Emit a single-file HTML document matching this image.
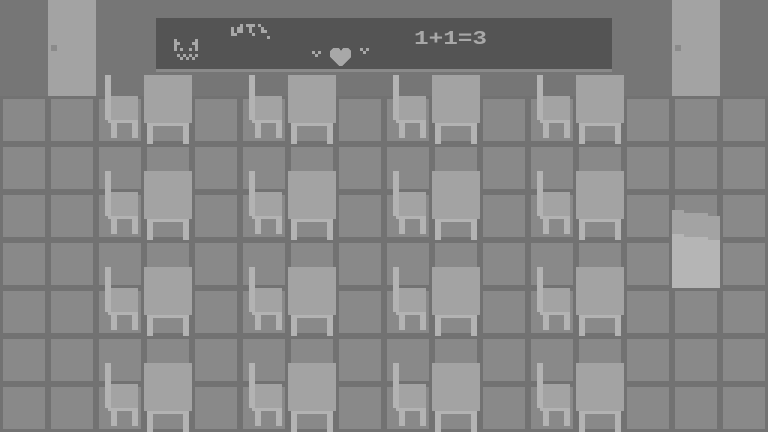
<!DOCTYPE html>
<html><head><meta charset="utf-8"><style>html,body{margin:0;padding:0;background:#767676;overflow:hidden}svg{display:block}</style></head>
<body>
<svg width="768" height="432" viewBox="0 0 768 432" xmlns="http://www.w3.org/2000/svg" shape-rendering="crispEdges">
<defs>
<pattern id="tile" x="0" y="96" width="48" height="48" patternUnits="userSpaceOnUse">
<rect width="48" height="48" fill="#727272"/>
<rect x="3" y="3" width="42" height="42" fill="#898989"/>
</pattern>
<g id="unit">
<!-- chair -->
<rect x="108" y="96" width="30" height="27" fill="#a3a3a3"/>
<rect x="108" y="120" width="30" height="3" fill="#b3b3b3"/>
<rect x="105" y="75" width="6" height="45" fill="#b3b3b3"/>
<rect x="111" y="123" width="6" height="15" fill="#b3b3b3"/>
<rect x="132" y="123" width="6" height="15" fill="#b3b3b3"/>
<!-- desk -->
<rect x="144" y="75" width="48" height="48" fill="#a3a3a3"/>
<rect x="147" y="123" width="42" height="3" fill="#b3b3b3"/>
<rect x="147" y="123" width="6" height="21" fill="#b3b3b3"/>
<rect x="183" y="123" width="6" height="21" fill="#b3b3b3"/>
</g>
<g id="row">
<use href="#unit"/>
<use href="#unit" x="144"/>
<use href="#unit" x="288"/>
<use href="#unit" x="432"/>
</g>
</defs>
<rect width="768" height="96" fill="#767676"/>
<rect y="96" width="768" height="336" fill="url(#tile)"/>
<!-- doors -->
<rect x="48" y="0" width="48" height="96" fill="#a3a3a3"/>
<rect x="51" y="45" width="6" height="6" fill="#8a8a8a"/>
<rect x="672" y="0" width="48" height="96" fill="#a3a3a3"/>
<rect x="675" y="45" width="6" height="6" fill="#8a8a8a"/>
<!-- blackboard -->
<rect x="156" y="18" width="456" height="51" fill="#545454"/>
<rect x="156" y="69" width="456" height="3" fill="#8a8a8a"/>
<!-- cat -->
<g fill="#a8a8a8">
<rect x="174" y="39" width="3" height="12"/><rect x="177" y="42" width="3" height="3"/>
<rect x="195" y="39" width="3" height="12"/><rect x="192" y="42" width="3" height="3"/>
<rect x="180" y="48" width="3" height="3"/><rect x="189" y="48" width="3" height="3"/>
<rect x="177" y="54" width="3" height="3"/><rect x="195" y="54" width="3" height="3"/>
<rect x="180" y="57" width="3" height="3"/><rect x="186" y="57" width="3" height="3"/><rect x="192" y="57" width="3" height="3"/>
<rect x="183" y="54" width="3" height="3"/><rect x="189" y="54" width="3" height="3"/>
<!-- scribble -->
<rect x="231" y="27" width="3" height="9"/><rect x="234" y="33" width="3" height="3"/><rect x="237" y="27" width="3" height="6"/>
<rect x="240" y="24" width="3" height="9"/><rect x="246" y="24" width="9" height="3"/><rect x="249" y="27" width="3" height="6"/>
<rect x="252" y="33" width="3" height="3"/><rect x="258" y="24" width="3" height="3"/><rect x="261" y="27" width="3" height="6"/>
<rect x="264" y="30" width="3" height="3"/><rect x="267" y="36" width="3" height="3"/>
<!-- heart marks -->
<rect x="312" y="51" width="3" height="3"/><rect x="315" y="54" width="3" height="3"/><rect x="318" y="51" width="3" height="3"/>
<rect x="360" y="48" width="3" height="3"/><rect x="363" y="51" width="3" height="3"/><rect x="366" y="48" width="3" height="3"/>
<path d="M330 51 L333 48 L339 48 L341 51 L343 48 L348 48 L351 51 L351 57 L345 63 L342 66 L339 66 L336 63 L330 57 Z"/>
</g>
<text x="414" y="44" font-family="Liberation Mono, monospace" font-weight="bold" font-size="19" fill="#a8a8a8" textLength="73" lengthAdjust="spacingAndGlyphs">1+1=3</text>
<!-- desks -->
<use href="#row"/>
<use href="#row" y="96"/>
<use href="#row" y="192"/>
<use href="#row" y="288"/>
<!-- stack -->
<rect x="672" y="210" width="12" height="24" fill="#a3a3a3"/>
<rect x="684" y="213" width="24" height="24" fill="#a3a3a3"/>
<rect x="708" y="216" width="12" height="24" fill="#a3a3a3"/>
<rect x="672" y="234" width="12" height="54" fill="#b5b5b5"/>
<rect x="684" y="237" width="24" height="51" fill="#b5b5b5"/>
<rect x="708" y="240" width="12" height="48" fill="#b5b5b5"/>
</svg>
</body></html>
